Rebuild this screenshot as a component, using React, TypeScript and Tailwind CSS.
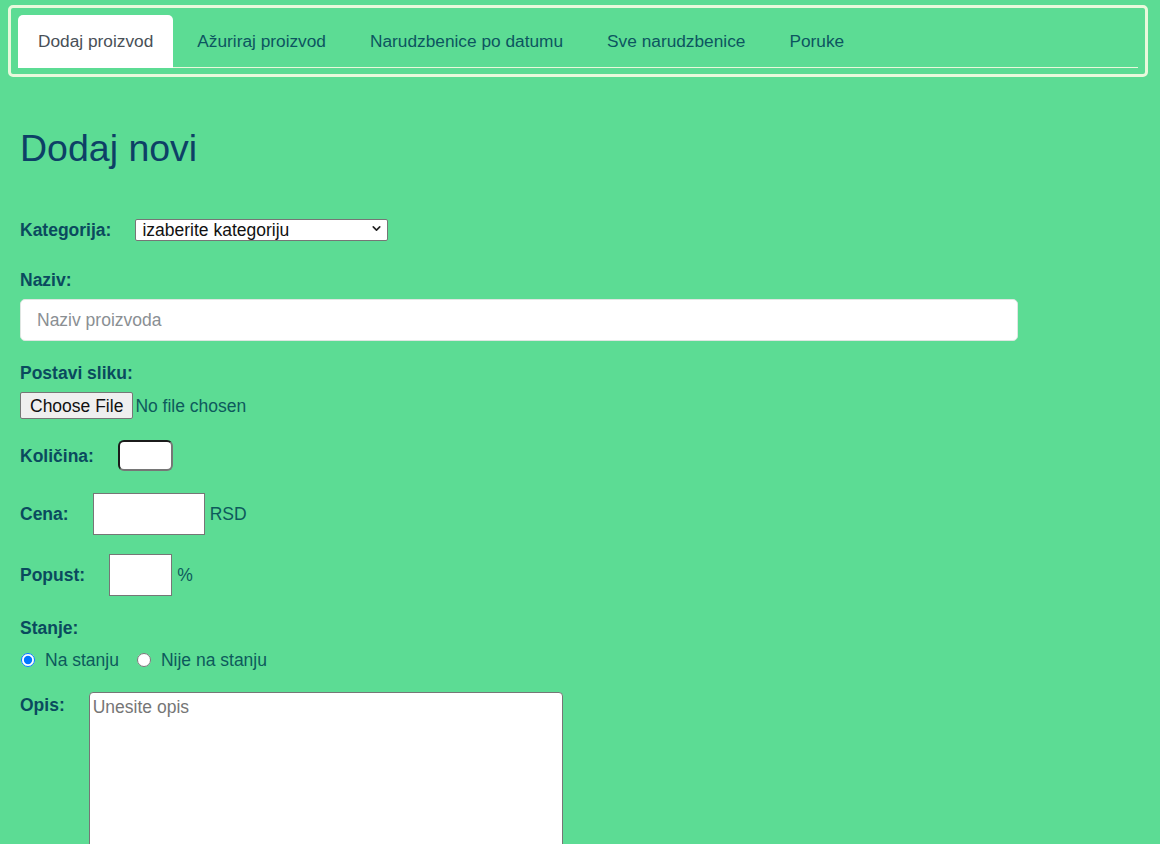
import React from 'react';
import { ChevronDown } from 'lucide-react';

const tabs = ['Dodaj proizvod', 'Ažuriraj proizvod', 'Narudzbenice po datumu', 'Sve narudzbenice', 'Poruke'];

export default function App() {
  return (
    <div className="min-h-screen bg-[#5cdc94] pt-[5px] font-['Liberation_Sans',Arial,sans-serif] text-[17.5px] text-[#0c4f5c]">
      {/* Tabs */}
      <nav className="ml-2 w-[1140px] rounded-[5px] border-[3px] border-[#e9f9dc] p-[7px] pb-[6px]">
        <ul className="flex gap-1 border-b border-[#e9f9dc]">
          {tabs.map((t, i) => (
            <li
              key={t}
              className={
                i === 0
                  ? '-mb-px flex h-[53px] items-center rounded-t-[5px] bg-white px-5 text-[17.3px] text-[#495057]'
                  : '-mb-px flex h-[53px] items-center px-5 text-[17.3px] text-[#0c5560]'
              }>
              {t}
            </li>
          ))}
        </ul>
      </nav>

      <main className="px-5">
        <h1 className="mt-[49px] text-[37.5px] leading-[44px] text-[#0d4066]">Dodaj novi</h1>

        <form className="flex flex-col">
          <div className="mt-[47px] flex items-center">
            <label className="mr-6 font-bold text-[#0a4a5e]">Kategorija:</label>
            <div className="relative">
              <select className="h-[22px] w-[253px] appearance-none rounded-[2px] border border-[#767676] bg-white pl-[6px] text-[17.5px] leading-[20px] text-[#111]">
                <option>izaberite kategoriju</option>
              </select>
              <ChevronDown className="pointer-events-none absolute right-[5px] top-[5px] h-[13px] w-[13px] text-[#222]" strokeWidth={3} />
            </div>
          </div>

          <label className="mt-[27px] font-bold leading-[20px] text-[#0a4a5e]">Naziv:</label>
          <input
            placeholder="Naziv proizvoda"
            className="mt-[9px] h-[42px] w-[998px] rounded-[5px] border border-[#dfe6e2] bg-white px-4 text-[17.5px] placeholder:text-[#8a8f93]"
          />

          <label className="mt-[22px] font-bold leading-[20px] text-[#0a4a5e]">Postavi sliku:</label>
          <input
            type="file"
            className="mt-[9px] block h-[27px] text-[17.5px] text-[#0d5a5c] file:mr-[2px] file:h-[27px] file:rounded-[2px] file:border file:border-[#767676] file:bg-[#efefef] file:px-[9px] file:text-[17.5px] file:text-[#111]"
          />

          <div className="mt-[21px] flex items-center">
            <label className="mr-6 font-bold text-[#0a4a5e]">Količina:</label>
            <input
              type="number"
              className="h-[31px] w-[55px] rounded-[6px] border-2 border-b-[#767676] border-l-[#1b1b1b] border-r-[#767676] border-t-[#1b1b1b] bg-white px-1"
            />
          </div>

          <div className="mt-[22px] flex items-center">
            <label className="mr-6 font-bold text-[#0a4a5e]">Cena:</label>
            <input className="h-[42px] w-[112px] border border-[#767676] bg-white px-1" />
            <span className="ml-[5px] text-[#0d5a5c]">RSD</span>
          </div>

          <div className="mt-[19px] flex items-center">
            <label className="mr-6 font-bold text-[#0a4a5e]">Popust:</label>
            <input className="h-[42px] w-[63px] border border-[#767676] bg-white px-1" />
            <span className="ml-[5px] text-[#0d5a5c]">%</span>
          </div>

          <label className="mt-[22px] font-bold leading-[20px] text-[#0a4a5e]">Stanje:</label>
          <div className="mt-[9px] flex items-center text-[#0d5a5c]">
            <label className="flex items-center">
              <input type="radio" name="stanje" defaultChecked className="ml-[1px] h-[14px] w-[14px]" />
              <span className="ml-[10px]">Na stanju</span>
            </label>
            <label className="ml-[18px] flex items-center">
              <input type="radio" name="stanje" className="h-[14px] w-[14px]" />
              <span className="ml-[10px]">Nije na stanju</span>
            </label>
          </div>

          <div className="mt-[18px] flex items-start">
            <label className="mr-6 font-bold text-[#0a4a5e]">Opis:</label>
            <textarea
              placeholder="Unesite opis"
              className="h-[200px] w-[474px] rounded-[4px] border border-[#767676] bg-white px-[3px] pt-[1px] text-[17.5px] placeholder:text-[#767676]"
            />
          </div>
        </form>
      </main>
    </div>
  );
}
